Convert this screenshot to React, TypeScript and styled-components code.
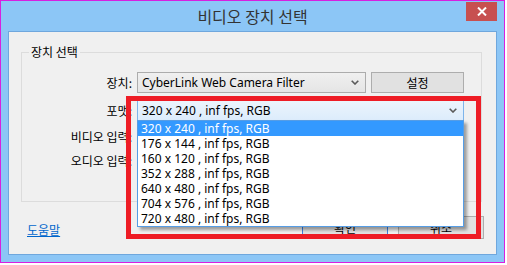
import styled, { createGlobalStyle } from 'styled-components';

const GlobalStyle = createGlobalStyle`
  html, body {
    margin: 0;
    padding: 0;
    background: #ffffff;
  }
  body {
    font-family: "Noto Sans", "Noto Sans CJK KR", sans-serif;
    font-size: 12px;
    color: #000;
  }
`;

const Window = styled.div`
  position: relative;
  width: 503px;
  height: 261px;
  border: 1px solid #d81fe0;
  background: #8cc6f6;
  display: flex;
  flex-direction: column;
`;

const TitleBar = styled.div`
  height: 30px;
  display: grid;
  grid-template-columns: 1fr auto 1fr;
  align-items: start;
`;

const Title = styled.div`
  grid-column: 2;
  line-height: 30px;
  font-family: "Noto Sans CJK KR", sans-serif;
  font-size: 16px;
  color: #333;
`;

const CloseButton = styled.div`
  grid-column: 3;
  justify-self: end;
  width: 31px;
  height: 19px;
  margin: 1px 7px 0 0;
  background: #c75050;
  display: flex;
  align-items: center;
  justify-content: center;
`;

const Panel = styled.div`
  flex: 1;
  margin: 0 7px 7px;
  background: #f0f0f0;
  border: 1px solid #6fa7dd;
  padding: 12px 14px 0 12px;
  display: flex;
  flex-direction: column;
`;

const GroupBox = styled.fieldset`
  margin: 0;
  padding: 12px 0 32px 0;
  border: 1px solid #dcdcdc;
  min-width: 0;
`;

const GroupTitle = styled.legend`
  margin-left: 7px;
  padding: 0 2px;
  line-height: 16px;
  font-family: "Noto Sans CJK KR", sans-serif;
`;

const FormGrid = styled.div`
  display: grid;
  grid-template-columns: 110px 229px 93px;
  grid-template-rows: 21px 21px 17px 17px;
  column-gap: 5px;
  row-gap: 7px;
`;

const Label = styled.div`
  grid-column: 1;
  text-align: right;
  align-self: center;
  font-family: "Noto Sans CJK KR", sans-serif;
  white-space: nowrap;
`;

const Combo = styled.div<{ $open?: boolean; $wide?: boolean }>`
  position: relative;
  grid-column: ${(p) => (p.$wide ? '2 / 4' : '2')};
  box-sizing: border-box;
  height: 21px;
  display: flex;
  align-items: center;
  justify-content: space-between;
  padding: 0 6px 0 4px;
  border: 1px solid ${(p) => (p.$open ? '#7eb4ea' : '#acacac')};
  background: ${(p) =>
    p.$open
      ? 'linear-gradient(#ecf4fc, #dcecfc)'
      : 'linear-gradient(#f0f0f0, #e5e5e5)'};
  white-space: nowrap;
`;

const Button = styled.div<{ $primary?: boolean; $width?: number }>`
  box-sizing: border-box;
  width: ${(p) => p.$width ?? 86}px;
  height: ${(p) => (p.$primary === undefined ? 21 : 23)}px;
  display: flex;
  align-items: center;
  justify-content: center;
  border: 1px solid ${(p) => (p.$primary ? '#3c7fe0' : '#adadad')};
  background: #e1e1e1;
  font-family: "Noto Sans CJK KR", sans-serif;
`;

const DropList = styled.div`
  position: absolute;
  top: 100%;
  left: -1px;
  right: -1px;
  box-sizing: border-box;
  border: 1px solid #569de5;
  background: #fff;
  box-shadow: 3px 3px 3px rgba(0, 0, 0, 0.35);
  z-index: 2;
`;

const Item = styled.div<{ $selected?: boolean }>`
  height: 15px;
  line-height: 15px;
  padding-left: 3px;
  background: ${(p) => (p.$selected ? '#3399ff' : 'transparent')};
  color: ${(p) => (p.$selected ? '#fff' : '#000')};
`;

const BottomRow = styled.div`
  display: flex;
  align-items: center;
  gap: 10px;
  margin: 14px -2px 0 6px;
`;

const HelpLink = styled.a`
  flex: 1;
  color: #0066cc;
  text-decoration: underline;
  font-family: "Noto Sans CJK KR", sans-serif;
  padding-top: 3px;
`;

const Highlight = styled.div`
  position: absolute;
  left: 125px;
  top: 95px;
  width: 355px;
  height: 143px;
  box-sizing: border-box;
  border: 5px solid #ee1c25;
  z-index: 3;
`;

const Chevron = () => (
  <svg width="8" height="5" viewBox="0 0 8 5">
    <polyline points="0.7,0.7 4,4 7.3,0.7" fill="none" stroke="#5a5a5a" strokeWidth="1.6" />
  </svg>
);

const formats = [
  '320 x 240 , inf fps, RGB',
  '176 x 144 , inf fps, RGB',
  '160 x 120 , inf fps, RGB',
  '352 x 288 , inf fps, RGB',
  '640 x 480 , inf fps, RGB',
  '704 x 576 , inf fps, RGB',
  '720 x 480 , inf fps, RGB',
];

export default function App() {
  return (
    <>
      <GlobalStyle />
      <Window>
        <TitleBar>
          <Title>비디오 장치 선택</Title>
          <CloseButton>
            <svg width="10" height="9" viewBox="0 0 10 9">
              <path d="M1 0.5 L9 8.5 M9 0.5 L1 8.5" stroke="#fff" strokeWidth="2" />
            </svg>
          </CloseButton>
        </TitleBar>
        <Panel>
          <GroupBox>
            <GroupTitle>장치 선택</GroupTitle>
            <FormGrid>
              <Label>장치:</Label>
              <Combo>
                <span>CyberLink Web Camera Filter</span>
                <Chevron />
              </Combo>
              <Button $width={93}>설정</Button>
              <Label>포맷:</Label>
              <Combo $open $wide>
                <span>{formats[0]}</span>
                <Chevron />
                <DropList>
                  {formats.map((f, i) => (
                    <Item key={f} $selected={i === 0}>
                      {f}
                    </Item>
                  ))}
                </DropList>
              </Combo>
              <Label>비디오 입력:</Label>
              <Label style={{ gridRow: 4 }}>오디오 입력:</Label>
            </FormGrid>
          </GroupBox>
          <BottomRow>
            <HelpLink>도움말</HelpLink>
            <Button $primary>확인</Button>
            <Button $primary={false}>취소</Button>
          </BottomRow>
        </Panel>
        <Highlight />
      </Window>
    </>
  );
}
